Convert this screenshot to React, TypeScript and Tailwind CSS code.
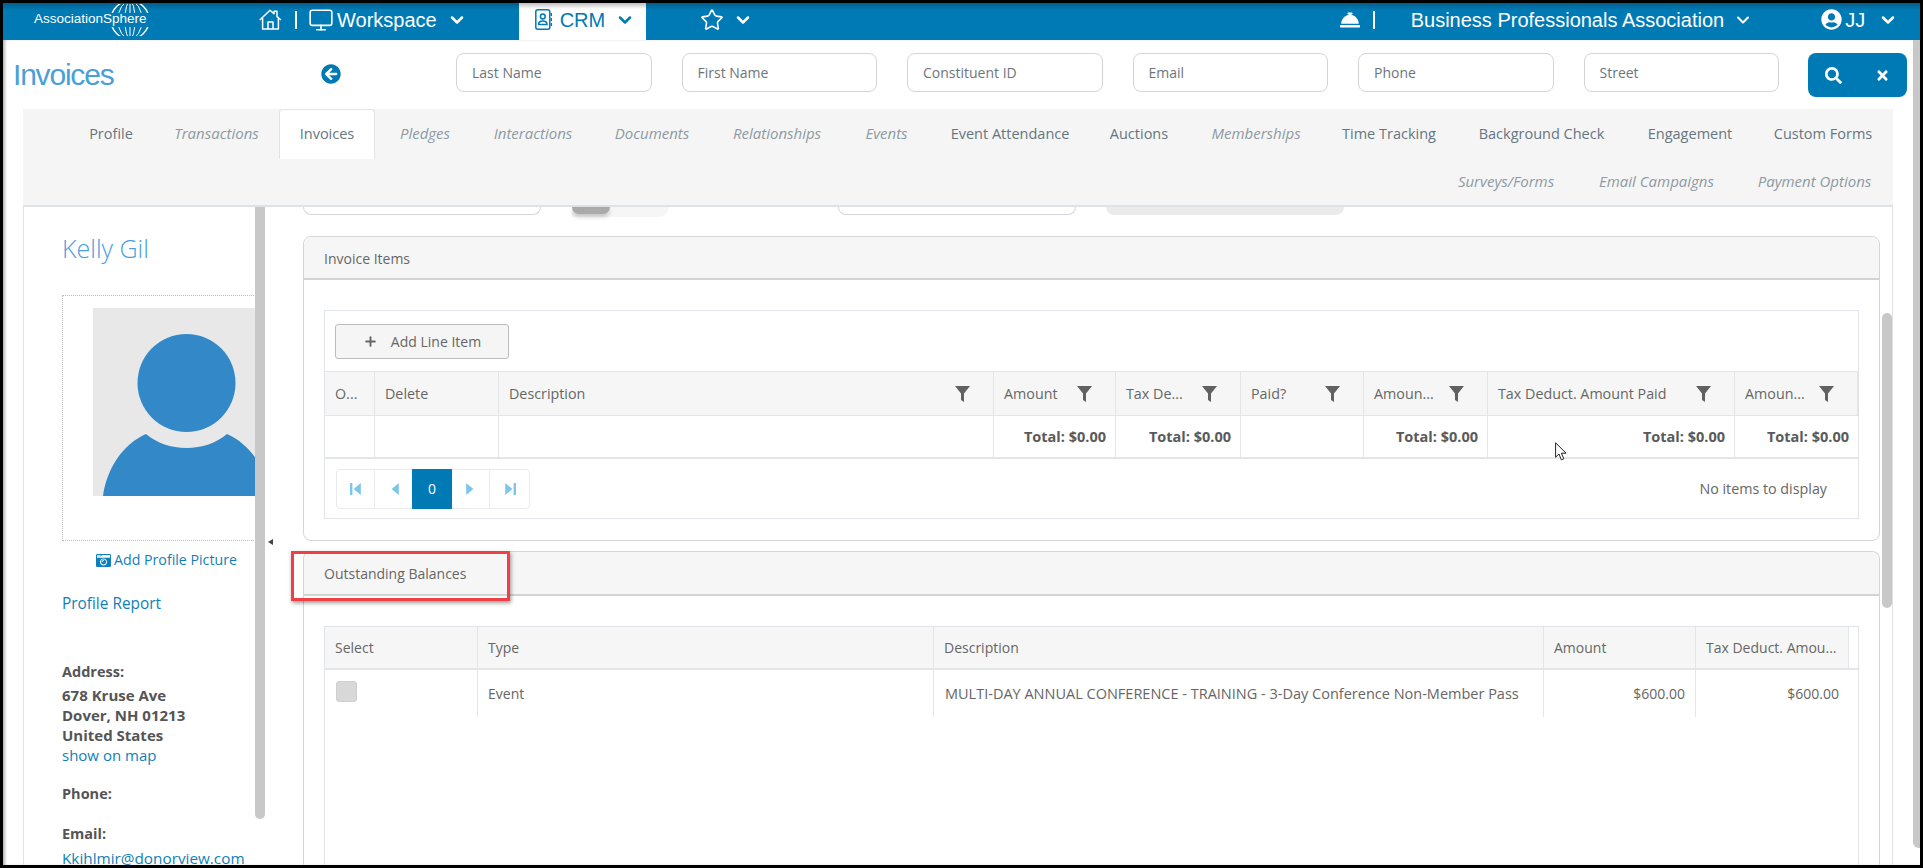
import { ChevronDown, Monitor, Plus, Star } from 'lucide-react';
import {
  FaArrowCircleLeft,
  FaCameraRetro,
  FaConciergeBell,
  FaSearch,
  FaTimes,
  FaUserCircle,
} from 'react-icons/fa';

const searchFields = ['Last Name', 'First Name', 'Constituent ID', 'Email', 'Phone', 'Street'];

const tabsTop = [
  { label: 'Profile', italic: false, cls: 'w-[86px]' },
  { label: 'Transactions', italic: true, cls: 'w-[125px]' },
  { label: 'Invoices', italic: false, active: true, cls: 'w-[96px]' },
  { label: 'Pledges', italic: true, cls: 'w-[100px]' },
  { label: 'Interactions', italic: true, cls: 'w-[116px]' },
  { label: 'Documents', italic: true, cls: 'w-[122px]' },
  { label: 'Relationships', italic: true, cls: 'w-[128px]' },
  { label: 'Events', italic: true, cls: 'w-[91px]' },
  { label: 'Event Attendance', italic: false, cls: 'w-[156px]' },
  { label: 'Auctions', italic: false, cls: 'w-[102px]' },
  { label: 'Memberships', italic: true, cls: 'w-[132px]' },
  { label: 'Time Tracking', italic: false, cls: 'w-[134px]' },
  { label: 'Background Check', italic: false, cls: 'w-[171px]' },
  { label: 'Engagement', italic: false, cls: 'w-[126px]' },
  { label: 'Custom Forms', italic: false, cls: 'w-[140px]' },
];

const tabsBottom = [
  { label: 'Surveys/Forms', cls: 'w-[142px]' },
  { label: 'Email Campaigns', cls: 'w-[159px]' },
  { label: 'Payment Options', cls: 'w-[157px]' },
];

const itemCols = [
  { label: 'O...' },
  { label: 'Delete' },
  { label: 'Description', filter: true },
  { label: 'Amount', filter: true, total: true },
  { label: 'Tax De...', filter: true, total: true },
  { label: 'Paid?', filter: true },
  { label: 'Amoun...', filter: true, total: true },
  { label: 'Tax Deduct. Amount Paid', filter: true, total: true },
  { label: 'Amoun...', filter: true, total: true },
];

const balanceCols = ['Select', 'Type', 'Description', 'Amount', 'Tax Deduct. Amou...'];

function HomeIcon() {
  return (
    <svg viewBox="0 0 23 21" className="w-[23px] h-[21px]" fill="none" stroke="white" strokeWidth="1.5" strokeLinejoin="round">
      <path d="M0.8 11 11 1.2l4 3.6V2.2h3v5.4l4 3.4" />
      <path d="M3.6 9v11h15.8V9" />
      <path d="M9 20v-7h5v7" />
    </svg>
  );
}

function ContactIcon() {
  return (
    <svg viewBox="0 0 17 21" className="w-[17px] h-[21px]" fill="none" stroke="#0079b6" strokeWidth="1.5">
      <rect x="0.8" y="0.8" width="14" height="19.4" rx="2" />
      <circle cx="7.8" cy="7.5" r="2.4" />
      <path d="M3.6 15.5c0-2.4 2-3.4 4.2-3.4s4.2 1 4.2 3.4z" />
      <path d="M16.4 4v3M16.4 9v3M16.4 14v3" />
    </svg>
  );
}

function Globe() {
  return (
    <svg viewBox="0 0 40 32" className="w-10 h-8" fill="none" stroke="white" strokeWidth="1">
      <defs>
        <clipPath id="globe-bands">
          <rect x="0" y="0" width="40" height="9" />
          <rect x="0" y="23" width="40" height="9" />
        </clipPath>
      </defs>
      <g clipPath="url(#globe-bands)">
        <circle cx="20" cy="16" r="19" strokeWidth="1.4" />
        <ellipse cx="20" cy="16" rx="12" ry="19" />
        <ellipse cx="20" cy="16" rx="5" ry="19" />
        <path d="M20 0v32" />
      </g>
    </svg>
  );
}

function Filter() {
  return (
    <svg viewBox="0 0 15 16" className="w-[15px] h-4 shrink-0" fill="#616161">
      <path d="M0 0h15L9 7.500V16L6 14V7.500z" />
    </svg>
  );
}

function PagerArrow({ dir, bar }: { dir: 'l' | 'r'; bar?: boolean }) {
  return (
    <svg viewBox="0 0 10 10" className="w-3 h-3" fill="#7cc6ea">
      {dir === 'l' ? <path d="M9 0v10L3 5z" /> : <path d="M1 0v10l6-5z" />}
      {bar && (dir === 'l' ? <rect x="0" y="0" width="2" height="10" /> : <rect x="8" y="0" width="2" height="10" />)}
    </svg>
  );
}

function Cursor() {
  return (
    <svg viewBox="0 0 12 19" className="absolute left-[1552px] top-[439px] w-3 h-[19px]" fill="white" stroke="#222" strokeWidth="1">
      <path d="M0.6 0.8v14.4l3.4-3.2 2.3 5.8 2.5-1-2.4-5.6h4.7z" />
    </svg>
  );
}

function Avatar() {
  return (
    <div className="w-[188px] h-[188px] bg-[#e8e8e8] ml-[30px] mt-3 shrink-0">
      <svg viewBox="0 0 188 188" className="w-[188px] h-[188px]" fill="#3388c8">
        <circle cx="93.500" cy="75" r="49" />
        <path d="M10 188C14 160 30 136 53 126c11 9 25 14 40.500 14s29.500-5 40.500-14c23 10 39 34 43 62z" />
      </svg>
    </div>
  );
}

function InvoiceItems() {
  return (
    <section className="h-[305px] border border-[#d5d5d5] rounded-lg flex flex-col shrink-0">
      <div className="h-[43px] bg-[#f6f6f6] border-b-2 border-[#d3d3d3] rounded-t-lg pl-5 pt-[2px] flex items-center text-[14px] text-[#666]">
        Invoice Items
      </div>
      <div className="mt-[30px] mx-5 h-[209px] border border-[#e0e3e8] flex flex-col">
        <div className="h-[60px] pl-[10px] pt-[13px]">
          <button className="w-[174px] h-[35px] bg-[#f5f5f5] border border-[#bdbdbd] rounded-[3px] flex items-center justify-center gap-[13px] text-[14px] text-[#666]">
            <Plus size={15} strokeWidth={3} className="text-[#666]" />
            Add Line Item
          </button>
        </div>
        <div className="grid grid-cols-[50px_124px_495px_122px_125px_123px_124px_247px_123px] border-t border-[#e3e5e9]">
          {itemCols.map((c, i) => (
            <div
              key={i}
              className="h-[44px] bg-[#f6f6f6] border-b border-r border-[#e3e5e9] last:border-r-0 pl-[10px] pr-[23px] flex items-center justify-between text-[14.3px] text-[#666]"
            >
              <span className="whitespace-nowrap">{c.label}</span>
              {c.filter && <Filter />}
            </div>
          ))}
          {itemCols.map((c, i) => (
            <div
              key={i}
              className="h-[43px] border-b-2 border-r border-[#e3e5e9] last:border-r-0 pr-[9px] flex items-center justify-end text-[14.5px] font-bold text-[#5a5a5a]"
            >
              {c.total && 'Total: $0.00'}
            </div>
          ))}
        </div>
        <div className="flex-1 flex items-center justify-between pl-[11px] pr-[31px]">
          <div className="flex h-10 border border-[#e8eaee] rounded-[4px]">
            <div className="w-[38px] border-r border-[#e8eaee] flex items-center justify-center">
              <PagerArrow dir="l" bar />
            </div>
            <div className="w-[37px] flex items-center justify-center">
              <PagerArrow dir="l" />
            </div>
            <div className="w-10 -my-px bg-[#007ab5] text-white text-[14px] flex items-center justify-center">0</div>
            <div className="w-[38px] border-r border-[#e8eaee] flex items-center justify-center">
              <PagerArrow dir="r" />
            </div>
            <div className="w-[39px] flex items-center justify-center">
              <PagerArrow dir="r" bar />
            </div>
          </div>
          <span className="text-[14.3px] text-[#666]">No items to display</span>
        </div>
      </div>
    </section>
  );
}

function OutstandingBalances() {
  return (
    <section className="mt-[10px] flex-1 border border-[#d5d5d5] border-b-0 rounded-t-lg flex flex-col">
      <div className="h-[44px] bg-[#f6f6f6] border-b-2 border-[#d3d3d3] rounded-t-lg pl-5 flex items-center text-[14px] text-[#666]">
        Outstanding Balances
      </div>
      <div className="mt-[30px] mx-5 flex-1 border border-b-0 border-[#e0e3e8]">
        <div className="grid grid-cols-[153px_456px_610px_152px_153px_9px] text-[14px] text-[#666]">
          {balanceCols.map((label) => (
            <div key={label} className="h-[43px] bg-[#f6f6f6] border-b-2 border-r border-[#e3e5e9] pl-[10px] flex items-center">
              {label}
            </div>
          ))}
          <div className="h-[43px] border-b-2 border-[#e3e5e9]" />
          <div className="h-[47px] border-r border-[#e3e5e9] pl-[11px] pt-[11px]">
            <div className="w-[21px] h-[21px] rounded-[3px] bg-[#d8d8d8] border border-[#cfcfcf]" />
          </div>
          <div className="h-[47px] border-r border-[#e3e5e9] pl-[10px] flex items-center">Event</div>
          <div className="h-[47px] border-r border-[#e3e5e9] pl-[11px] flex items-center whitespace-nowrap text-[14.5px]">
            MULTI-DAY ANNUAL CONFERENCE - TRAINING - 3-Day Conference Non-Member Pass
          </div>
          <div className="h-[47px] border-r border-[#e3e5e9] pr-[10px] flex items-center justify-end">$600.00</div>
          <div className="h-[47px] pr-[10px] flex items-center justify-end">$600.00</div>
        </div>
      </div>
    </section>
  );
}

export default function App() {
  return (
    <div className="relative w-[1923px] h-[868px] overflow-hidden bg-white border-[3px] border-black flex flex-col font-['Open_Sans',sans-serif]">
      {/* Top nav */}
      <header className="h-[37px] shrink-0 flex items-center pb-1 bg-[linear-gradient(#005d8a_0,#007ab5_7px)] text-white text-[20px] font-['Liberation_Sans',sans-serif]">
        <div className="relative self-start w-[256px] h-[37px]">
          <span className="absolute left-[31px] top-[7px] text-[13.5px] leading-[18px]">AssociationSphere</span>
          <div className="absolute left-[107px] top-[1px]">
            <Globe />
          </div>
        </div>
        <HomeIcon />
        <span className="ml-[13px] w-[2px] h-[18px] bg-white" />
        <Monitor size={26} strokeWidth={1.5} className="ml-[11px]" />
        <span className="ml-[3px]">Workspace</span>
        <ChevronDown size={20} strokeWidth={3} className="ml-[10px]" />
        <div className="self-start ml-[52px] w-[127px] h-[37px] flex items-center pl-4 pb-1 bg-[linear-gradient(#bdbdbd_0,#fff_6px)] text-[#0079b6]">
          <ContactIcon />
          <span className="ml-2">CRM</span>
          <ChevronDown size={20} strokeWidth={3} className="ml-[10px]" />
        </div>
        <Star size={24} strokeWidth={1.6} className="ml-[54px]" />
        <ChevronDown size={20} strokeWidth={3} className="ml-[9px]" />
        <FaConciergeBell size={20} className="ml-[587px]" />
        <span className="ml-[13px] w-[2px] h-[18px] bg-white" />
        <span className="ml-[36px] whitespace-nowrap">Business Professionals Association</span>
        <ChevronDown size={20} strokeWidth={2.5} className="ml-[9px]" />
        <FaUserCircle size={21} className="ml-[68px]" />
        <span className="ml-[3px]">JJ</span>
        <ChevronDown size={20} strokeWidth={3} className="ml-[13px]" />
      </header>

      <div className="flex-1 min-h-0 flex shadow-[inset_3px_0_3px_-1px_rgba(0,0,0,0.3)]">
        <div className="w-[1910px] flex flex-col">
          {/* Search row */}
          <div className="h-[69px] shrink-0 flex items-start pt-[13px]">
            <h1 className="w-[318px] pl-[10px] text-[30px] leading-[44px] tracking-[-1.2px] text-[#4a9fd8] font-['Liberation_Sans',sans-serif]">
              Invoices
            </h1>
            <FaArrowCircleLeft size={20} className="mt-[11px] text-[#007ab5] shrink-0" />
            <div className="ml-[115px] flex gap-[30px]">
              {searchFields.map((f) => (
                <input
                  key={f}
                  placeholder={f}
                  className="w-[195.5px] h-[39px] rounded-lg border border-[#d3d5da] px-[15px] text-[14px] placeholder:text-[#6c757d] bg-white"
                />
              ))}
            </div>
            <div className="ml-[29px] w-[99px] h-[44px] rounded-lg bg-[#007ab5] text-white flex items-center justify-between pl-[17px] pr-[17px]">
              <FaSearch size={17} />
              <FaTimes size={15} />
            </div>
          </div>

          <div className="ml-[20px] w-[1870px] flex-1 min-h-0 flex flex-col">
            {/* Tabs */}
            <nav className="h-[98px] shrink-0 bg-[#f5f5f5] border-b-2 border-[#dfe3e6] flex flex-col">
              <div className="flex justify-end">
                {tabsTop.map((t) => (
                  <div
                    key={t.label}
                    className={`${t.cls} h-[50px] pb-px flex items-center justify-center whitespace-nowrap ${
                      t.active ? 'bg-white border border-b-0 border-[#e3e3e3] rounded-t' : ''
                    } ${t.italic ? 'italic text-[15px] text-[#8d9aa3]' : 'text-[14.5px] text-[#66757f]'}`}
                  >
                    {t.label}
                  </div>
                ))}
              </div>
              <div className="flex justify-end -mt-[2px]">
                {tabsBottom.map((t) => (
                  <div key={t.label} className={`${t.cls} h-[50px] pb-px flex items-center justify-center italic text-[15px] text-[#8d9aa3] whitespace-nowrap`}>
                    {t.label}
                  </div>
                ))}
              </div>
            </nav>

            <div className="flex-1 min-h-0 flex border-l border-r border-[#dfe3e6]">
              {/* Profile column */}
              <aside className="w-[231px] shrink-0 overflow-hidden pl-[38px] text-[15px] text-[#555]">
                <div className="mt-[23px] h-9 leading-9 text-[25px] font-light text-[#4a9fdc] whitespace-nowrap">Kelly Gil</div>
                <div className="mt-[29px] w-[300px] h-[246px] border border-dotted border-[#bbb] flex">
                  <Avatar />
                </div>
                <a className="mt-[9px] ml-[34px] h-5 leading-5 flex items-center gap-[3px] text-[14.2px] text-[#0f7fb8] whitespace-nowrap">
                  <FaCameraRetro size={15} />
                  Add Profile Picture
                </a>
                <a className="block mt-[24px] h-5 leading-5 text-[15.4px] text-[#0f7fb8]">Profile Report</a>
                <div className="mt-[48px] h-5 leading-5 text-[14.5px] font-bold">Address:</div>
                <div className="mt-[3px] leading-5 font-bold">
                  678 Kruse Ave
                  <br />
                  Dover, NH 01213
                  <br />
                  United States
                </div>
                <a className="block h-5 leading-5 text-[#0f7fb8]">show on map</a>
                <div className="mt-[19px] h-5 leading-5 text-[14.5px] font-bold">Phone:</div>
                <div className="mt-5 h-5 leading-5 text-[14.5px] font-bold">Email:</div>
                <a className="block mt-1 h-5 leading-5 text-[15.3px] text-[#0f7fb8]">Kkihlmir@donorview.com</a>
              </aside>

              <div className="w-[10px] h-[612px] shrink-0 bg-[#c8c8c8] rounded-b-md" />

              <div className="w-[38px] shrink-0 pl-[3px] pt-[332px]">
                <div className="w-0 h-0 border-y-[3px] border-y-transparent border-r-[5px] border-r-[#444]" />
              </div>

              {/* Main column */}
              <main className="w-[1577px] shrink-0 flex flex-col">
                <div className="h-[29px] shrink-0 flex items-start">
                  <div className="w-[238px] h-[8px] border border-t-0 border-[#d3d7db] rounded-b-lg" />
                  <div className="ml-[31px] w-[97px] h-[10px] bg-[#f6f6f6] rounded-br-2xl">
                    <div className="w-[38px] h-[7px] bg-[#aaa] rounded-b-[20px] shadow-[0_3px_4px_rgba(0,0,0,0.2)]" />
                  </div>
                  <div className="ml-[169px] w-[238px] h-[8px] border border-t-0 border-[#d3d7db] rounded-b-lg" />
                  <div className="ml-[30px] w-[238px] h-[8px] bg-[#ebebeb] rounded-b-lg" />
                </div>
                <InvoiceItems />
                <OutstandingBalances />
              </main>

              <div className="ml-[2px] w-[10px] h-[295px] mt-[106px] shrink-0 bg-[#c8c8c8] rounded-md" />
            </div>
          </div>
        </div>

        {/* Page scrollbar */}
        <div className="w-[7px] h-[808px] bg-[#c8c8c8] rounded-bl-md" />
      </div>

      {/* Callout drawn on the screenshot */}
      <div className="absolute left-[288px] top-[548px] w-[219px] h-[50px] border-[3px] border-[#f04046] shadow-[1px_2px_4px_rgba(0,0,0,0.4)]" />
      <Cursor />
    </div>
  );
}
